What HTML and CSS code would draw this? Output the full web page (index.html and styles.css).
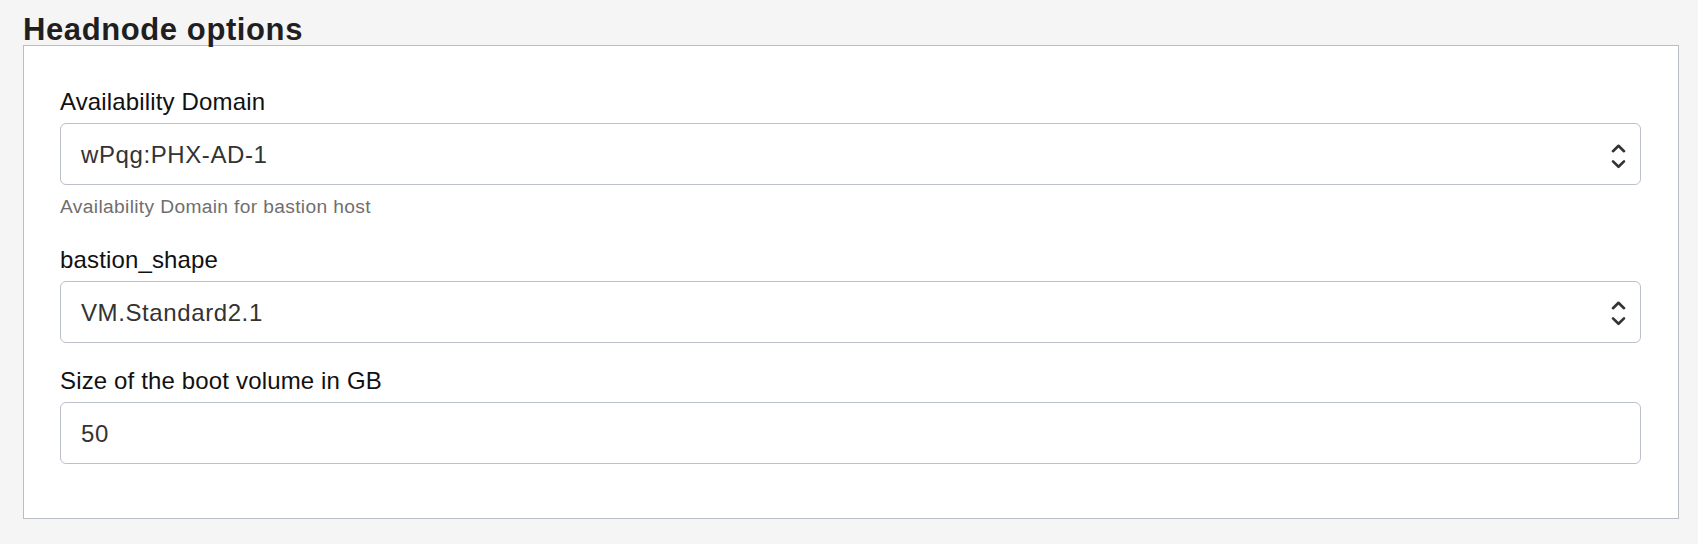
FILE: index.html
```html
<!DOCTYPE html>
<html lang="en">
<head>
<meta charset="utf-8">
<title>Headnode options</title>
<link rel="stylesheet" href="styles.css">
</head>
<body>
<div class="page">
  <h2 class="section-title">Headnode options</h2>
  <div class="panel">
    <div class="form-group">
      <label class="field-label">Availability Domain</label>
      <div class="control select">
        <span class="value">wPqg:PHX-AD-1</span>
        <svg class="chevrons" width="15" height="25" viewBox="0 0 15 25" aria-hidden="true">
          <path d="M2 7.2 L7.5 1.8 L13 7.2" fill="none" stroke="#333" stroke-width="2.6" stroke-linecap="round" stroke-linejoin="round"/>
          <path d="M2 17.4 L7.5 22.8 L13 17.4" fill="none" stroke="#333" stroke-width="2.6" stroke-linecap="round" stroke-linejoin="round"/>
        </svg>
      </div>
      <div class="help">Availability Domain for bastion host</div>
    </div>
    <div class="form-group">
      <label class="field-label">bastion_shape</label>
      <div class="control select">
        <span class="value">VM.Standard2.1</span>
        <svg class="chevrons" width="15" height="25" viewBox="0 0 15 25" aria-hidden="true">
          <path d="M2 7.2 L7.5 1.8 L13 7.2" fill="none" stroke="#333" stroke-width="2.6" stroke-linecap="round" stroke-linejoin="round"/>
          <path d="M2 17.4 L7.5 22.8 L13 17.4" fill="none" stroke="#333" stroke-width="2.6" stroke-linecap="round" stroke-linejoin="round"/>
        </svg>
      </div>
    </div>
    <div class="form-group last">
      <label class="field-label">Size of the boot volume in GB</label>
      <div class="control">
        <span class="value">50</span>
      </div>
    </div>
  </div>
</div>
</body>
</html>
```

FILE: styles.css
```css
html, body {
  margin: 0;
  padding: 0;
  background: #f5f5f5;
}

body {
  font-family: "Liberation Sans", Arial, Helvetica, sans-serif;
  color: #161513;
}

.page {
  padding: 15px 19px 0 23px;
}

.section-title {
  margin: 0 0 1px 0;
  font-size: 31px;
  line-height: 29px;
  font-weight: 700;
  letter-spacing: 0.6px;
  color: #1f1f1f;
}

.panel {
  background: #ffffff;
  border: 1px solid #b9bdc4;
  padding: 38px 37px 54px 36px;
}

.form-group {
  margin-bottom: 20px;
}

.form-group.last {
  margin-bottom: 0;
}

.field-label {
  display: block;
  font-size: 24px;
  line-height: 36px;
  margin-bottom: 3px;
  color: #111111;
  letter-spacing: 0.15px;
}

.control {
  box-sizing: border-box;
  height: 62px;
  border: 1px solid #bcc0c8;
  border-radius: 6px;
  background: #ffffff;
  display: flex;
  align-items: center;
  justify-content: space-between;
  padding: 2px 14px 0 20px;
}

.value {
  font-size: 24px;
  color: #333333;
  letter-spacing: 0.6px;
}

.chevrons {
  display: block;
  margin-top: 2px;
}

.help {
  margin-top: 8px;
  font-size: 19.2px;
  line-height: 28.8px;
  color: #6f6f6f;
  letter-spacing: 0.35px;
}
```
